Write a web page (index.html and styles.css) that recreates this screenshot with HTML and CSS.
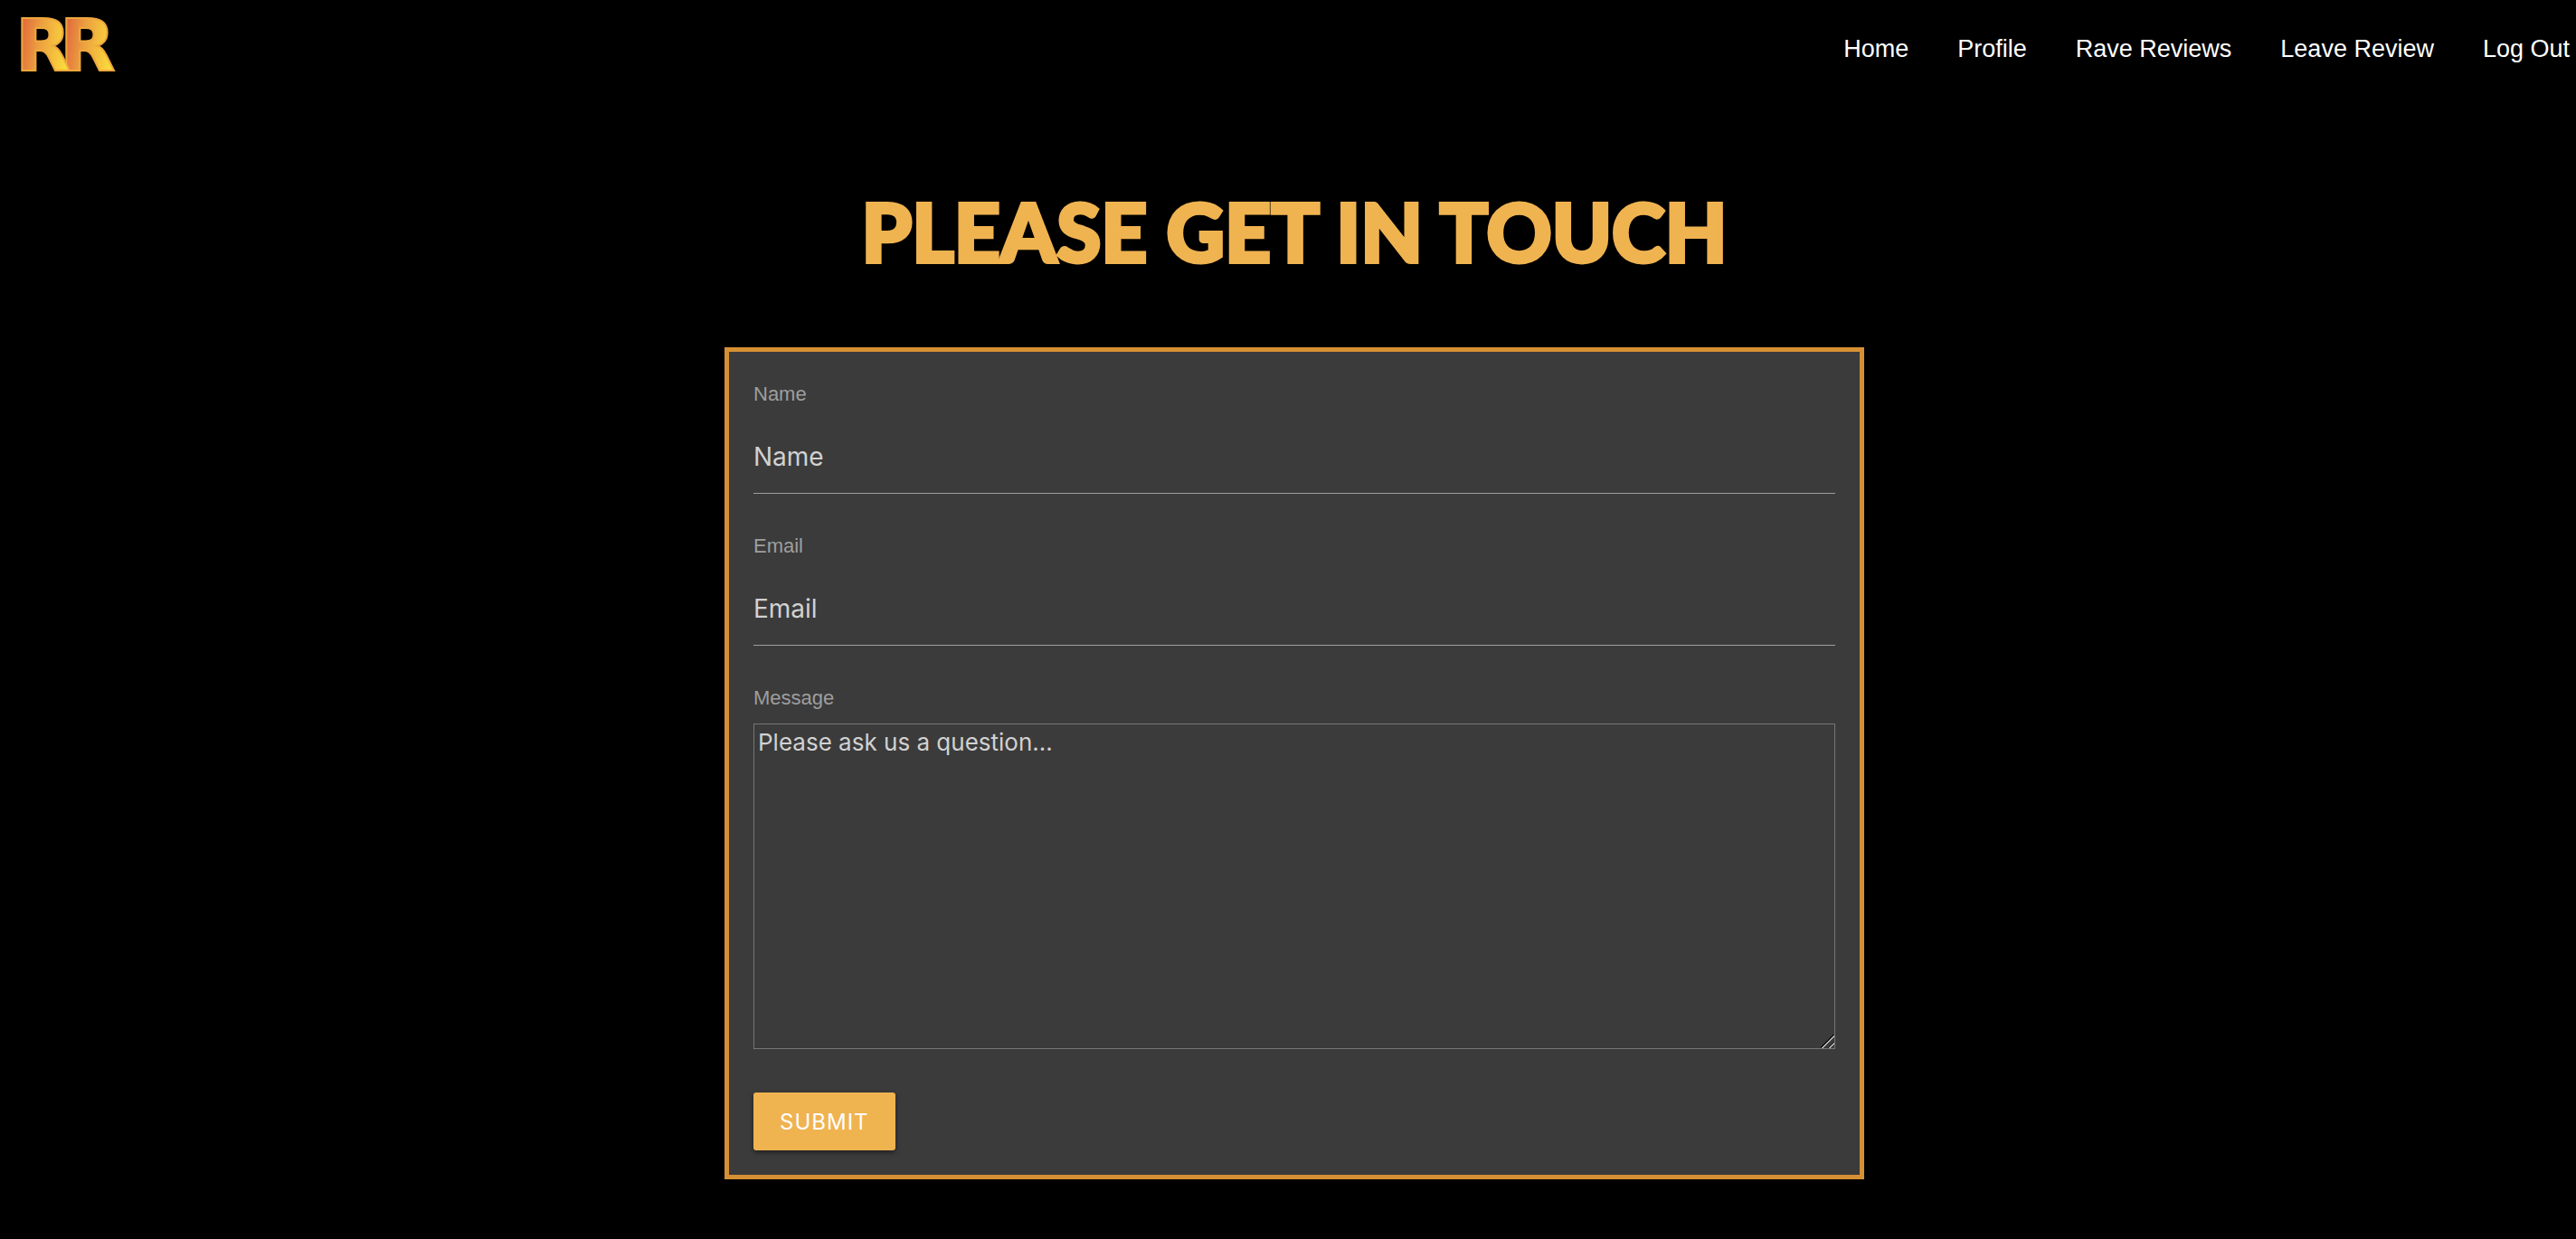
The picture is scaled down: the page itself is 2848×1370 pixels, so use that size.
FILE: index.html
```html
<!DOCTYPE html>
<html lang="en">
<head>
<meta charset="utf-8">
<meta name="viewport" content="width=device-width, initial-scale=1">
<title>Please Get In Touch</title>
<link rel="stylesheet" href="styles.css">
</head>
<body>
<header class="navbar">
  <a class="logo" href="#" aria-label="Home page">
    <svg width="150" height="108" viewBox="0 0 150 108" aria-hidden="true">
      <defs>
        <linearGradient id="flame" x1="0" y1="0" x2="1" y2="0.2">
          <stop offset="0.1" stop-color="#e0603c"/>
          <stop offset="0.5" stop-color="#eca040"/>
          <stop offset="1" stop-color="#fbd93c"/>
        </linearGradient>
      </defs>
      <g class="logo-letters" fill="url(#flame)" stroke="#efa83c" stroke-width="2">
        <text x="66" y="78">R</text>
        <text x="17" y="78">R</text>
      </g>
    </svg>
  </a>
  <nav class="nav-links">
    <a href="#">Home</a>
    <a href="#">Profile</a>
    <a href="#">Rave Reviews</a>
    <a href="#">Leave Review</a>
    <a href="#">Log Out</a>
  </nav>
</header>
<main class="content">
  <h1 class="title">PLEASE GET IN TOUCH</h1>
  <form class="card">
    <div class="field">
      <label for="name">Name</label>
      <input id="name" type="text" placeholder="Name">
    </div>
    <div class="field">
      <label for="email">Email</label>
      <input id="email" type="email" placeholder="Email">
    </div>
    <div class="field">
      <label for="message">Message</label>
      <textarea id="message" placeholder="Please ask us a question..."></textarea>
    </div>
    <button class="submit" type="submit">SUBMIT</button>
  </form>
</main>
</body>
</html>
```
FILE: styles.css
```css
* {
  box-sizing: border-box;
}

body {
  margin: 0;
  background: #000;
  color: #fff;
  font-family: "Liberation Sans", Arial, sans-serif;
}

.navbar {
  display: flex;
  justify-content: space-between;
  align-items: center;
  height: 108px;
  padding-right: 7px;
}

.logo svg {
  display: block;
}

.logo-letters {
  font-family: "DejaVu Sans", sans-serif;
  font-weight: 700;
  font-size: 80px;
}

.nav-links {
  display: flex;
  gap: 54px;
  font-size: 27px;
}

.nav-links a {
  color: #fff;
  text-decoration: none;
}

.content {
  display: flex;
  flex-direction: column;
  align-items: center;
  padding: 88px 0 64px 14px;
}

.title {
  margin: 0 0 68px;
  color: #efb350;
  font-family: Lato, sans-serif;
  font-weight: 900;
  font-size: 89px;
  line-height: 120px;
  -webkit-text-stroke: 4px #efb350;
}

.card {
  width: 44.46%;
  padding: 26px 27px 27px;
  border: 5px solid #d69034;
  background: #3b3b3b;
}

.field {
  display: flex;
  flex-direction: column;
  gap: 7px;
  margin-bottom: 37px;
}

.field label {
  color: #9e9e9e;
  font-size: 22px;
  line-height: 42px;
}

.field input,
.field textarea {
  width: 100%;
  margin: 0;
  background: transparent;
  color: #d1d1d1;
  font-family: Inter, sans-serif;
}

.field input {
  height: 82px;
  padding: 0;
  border: 0;
  border-bottom: 1px solid #9e9e9e;
  font-size: 28px;
}

.field textarea {
  height: 360px;
  margin-bottom: 11px;
  padding: 4px;
  border: 1px solid #767676;
  font-size: 26px;
  line-height: 32px;
  resize: vertical;
}

.field textarea::-webkit-resizer {
  background: linear-gradient(135deg, transparent 46%, #111 46% 51%, #bbb 51% 58%, transparent 58% 74%, #111 74% 79%, #bbb 79% 86%, transparent 86%);
}

.field ::placeholder {
  color: #d1d1d1;
  opacity: 1;
}

.submit {
  display: block;
  height: 64px;
  padding: 0 29px;
  border: 0;
  border-radius: 3px;
  background: #efb350;
  color: #fff;
  box-shadow: 0 2px 5px rgba(0, 0, 0, 0.5);
  font-family: Inter, sans-serif;
  font-size: 24px;
  letter-spacing: 1px;
}
```
